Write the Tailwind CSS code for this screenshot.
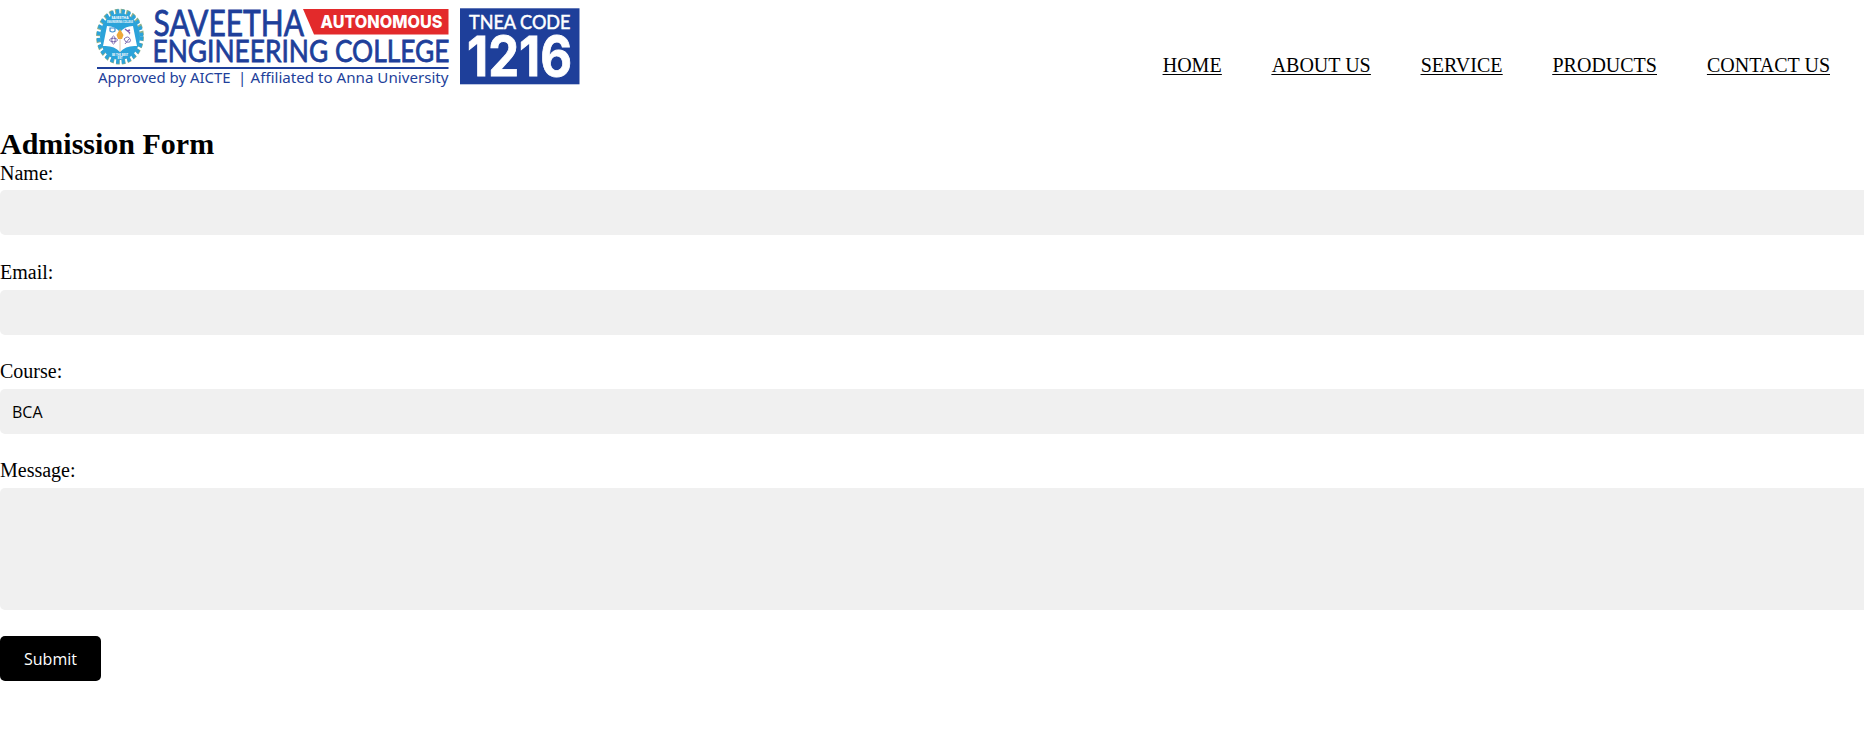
<!DOCTYPE html>
<html lang="en">
<head>
<meta charset="utf-8">
<title>Admission Form</title>
<script src="https://cdn.jsdelivr.net/npm/@tailwindcss/browser@4"></script>
</head>
<body class="bg-white text-black text-[20px] leading-[23px] font-['Liberation_Serif',serif] overflow-hidden">
<header class="flex justify-between h-[126px] pl-[94px] pr-[34px]">
  <svg class="block h-[92px] w-[492px] shrink-0" viewBox="94 0 492 92" role="img" aria-label="Saveetha Engineering College">
    <g transform="translate(120 36.6) scale(1 1.17)">
      <circle r="21.7" fill="none" stroke="#8fb08a" stroke-width="4.4" stroke-dasharray="3.68 2"/>
      <circle r="21.5" fill="none" stroke="#2ba3da" stroke-width="3.6" stroke-dasharray="3.2 2.48" stroke-dashoffset="-.2"/>
      <circle r="20" fill="#2ba3da"/>
    </g>
    <path d="M107 26Q115 26 120 32Q125 26 133 26L137 46Q126 45 120 52Q114 45 103 46Z" fill="#fff"/>
    <path d="M120 32V52" stroke="#d7b995" stroke-width=".8"/>
    <path d="M120 29L123.500 35L122 39H118L116.500 35Z" fill="#eda83a"/>
    <path d="M110 28v3q2.500 2 5 0v-3z" fill="none" stroke="#3b8ed0" stroke-width="1.200"/>
    <path d="M125 29l5 4m0-3l-3 1m2 2l1 1" stroke="#8260b4" stroke-width="1.400"/>
    <g fill="none" stroke="#7361aa" stroke-width=".9"><ellipse cx="113.500" cy="40" rx="4" ry="1.700"/><ellipse cx="113.500" cy="40" rx="1.700" ry="4"/><path d="M124 39q4-4 6 0t-4 3zM125 44l4-5"/></g>
    <g fill="#fff" font-family="Open Sans, sans-serif" font-weight="700" text-anchor="middle">
      <text x="120" y="19" font-size="4.200" textLength="17" lengthAdjust="spacingAndGlyphs">SAVEETHA</text>
      <text x="120" y="23" font-size="3" textLength="26" lengthAdjust="spacingAndGlyphs">ENGINEERING COLLEGE</text>
      <text x="120" y="55.500" font-size="3.600" textLength="16" lengthAdjust="spacingAndGlyphs">BE THE BEST</text>
      <text x="120" y="59" font-size="3">EST</text>
    </g>
    <g fill="#1e3f9a" font-family="Lato, sans-serif">
      <text x="153.500" y="35.700" font-size="36.500" font-weight="400" stroke="#1e3f9a" stroke-width=".8" textLength="150.500" lengthAdjust="spacingAndGlyphs">SAVEETHA</text>
      <text x="152.500" y="62" font-size="30.500" font-weight="400" stroke="#1e3f9a" stroke-width=".8" textLength="297" lengthAdjust="spacingAndGlyphs">ENGINEERING COLLEGE</text>
      <rect x="97" y="67" width="351.500" height="2"/>
    </g>
    <g fill="#1e3f9a" font-family="Noto Sans, sans-serif" font-size="15">
      <text x="98" y="83.300" textLength="132.500" lengthAdjust="spacingAndGlyphs">Approved by AICTE</text>
      <text x="238" y="83.300">|</text>
      <text x="250.500" y="83.300" textLength="198" lengthAdjust="spacingAndGlyphs">Affiliated to Anna University</text>
    </g>
    <path d="M303 9H448.500V34.500H314Z" fill="#e32a2b"/>
    <text x="320.500" y="27.800" font-family="Inter, sans-serif" font-size="18" font-weight="800" fill="#fff" textLength="122" lengthAdjust="spacingAndGlyphs">AUTONOMOUS</text>
    <rect x="460" y="8.300" width="119.500" height="76" fill="#1e3f9a"/>
    <g fill="#fff">
      <text x="469" y="29.300" font-family="Lato, sans-serif" font-size="18.500" font-weight="400" stroke="#fff" stroke-width=".5" textLength="101.500" lengthAdjust="spacingAndGlyphs">TNEA CODE</text>
      <text x="467" y="76.200" font-family="Inter, sans-serif" font-size="54.500" font-weight="700" stroke="#fff" stroke-width=".8" textLength="105" lengthAdjust="spacingAndGlyphs">1216</text>
    </g>
  </svg>
  <nav class="flex gap-[50px] pt-[54px] underline underline-offset-2 decoration-1 whitespace-nowrap">
    <a href="#">HOME</a>
    <a href="#">ABOUT US</a>
    <a href="#">SERVICE</a>
    <a href="#">PRODUCTS</a>
    <a href="#">CONTACT US</a>
  </nav>
</header>
<main>
  <h2 class="text-[30px] leading-[35px] font-bold">Admission Form</h2>
  <form class="flex flex-col items-start pt-px">
    <label for="name">Name:</label>
    <input id="name" class="mt-[5px] h-[45px] w-full rounded-l-[5px] bg-[#f0f0f0]">
    <label for="email" class="mt-[26px]">Email:</label>
    <input id="email" class="mt-[6px] h-[45px] w-full rounded-l-[5px] bg-[#f0f0f0]">
    <label for="course" class="mt-[25px]">Course:</label>
    <select id="course" class="mt-[6px] h-[45px] w-full appearance-none rounded-l-[5px] bg-[#f0f0f0] px-3 pt-[2px] font-['Open_Sans',sans-serif] text-[16px]"><option>BCA</option></select>
    <label for="message" class="mt-[25px]">Message:</label>
    <textarea id="message" class="mt-[6px] h-[122px] w-full resize-none rounded-l-[5px] bg-[#f0f0f0]"></textarea>
    <button type="button" class="mt-[26px] h-[45px] w-[101px] rounded-[5px] bg-black pt-[2px] font-['Open_Sans',sans-serif] text-[16px] text-white">Submit</button>
  </form>
</main>
</body>
</html>
